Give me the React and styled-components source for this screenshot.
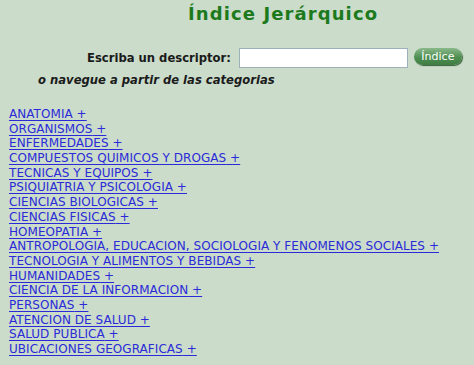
import styled, { createGlobalStyle } from 'styled-components';

const categories = [
  'ANATOMIA',
  'ORGANISMOS',
  'ENFERMEDADES',
  'COMPUESTOS QUIMICOS Y DROGAS',
  'TECNICAS Y EQUIPOS',
  'PSIQUIATRIA Y PSICOLOGIA',
  'CIENCIAS BIOLOGICAS',
  'CIENCIAS FISICAS',
  'HOMEOPATIA',
  'ANTROPOLOGIA, EDUCACION, SOCIOLOGIA Y FENOMENOS SOCIALES',
  'TECNOLOGIA Y ALIMENTOS Y BEBIDAS',
  'HUMANIDADES',
  'CIENCIA DE LA INFORMACION',
  'PERSONAS',
  'ATENCION DE SALUD',
  'SALUD PUBLICA',
  'UBICACIONES GEOGRAFICAS',
];

const GlobalStyle = createGlobalStyle`
  html, body {
    margin: 0;
    padding: 0;
    background: #cbdccb;
  }
  body {
    font-family: 'DejaVu Sans', Verdana, sans-serif;
  }
`;

const App = () => (
  <Page>
    <GlobalStyle />
    <Title>Índice Jerárquico</Title>
    <SearchRow>
      <Label htmlFor='descriptor'>Escriba un descriptor:</Label>
      <Input id='descriptor' type='text' />
      <IndexButton type='button'>Índice</IndexButton>
    </SearchRow>
    <Browse>o navegue a partir de las categorias</Browse>
    <List>
      {categories.map((c) => (
        <li key={c}>
          <CatLink href='#'>{c} +</CatLink>
        </li>
      ))}
    </List>
  </Page>
);

export default App;

const Page = styled.div`
  width: 474px;
  height: 365px;
  box-sizing: border-box;
  padding: 2px 9px 0 9px;
  background: #cbdccb;
  overflow: hidden;
`;

const Title = styled.h1`
  margin: 0;
  padding-left: 179px;
  text-align: left;
  color: #1c7a1c;
  font-size: 18px;
  font-weight: bold;
  line-height: 24px;
  letter-spacing: 1.1px;
`;

const SearchRow = styled.div`
  display: flex;
  align-items: center;
  margin-top: 21px;
  padding-left: 78px;
  height: 22px;
`;

const Label = styled.label`
  font-size: 11.6px;
  font-weight: bold;
  color: #1a1a1a;
  margin-right: 8px;
`;

const Input = styled.input`
  width: 169px;
  height: 20px;
  box-sizing: border-box;
  border: 1px solid #9fb0bd;
  background: #fff;
  margin: 0;
  padding: 0 3px;
`;

const IndexButton = styled.button`
  margin-left: 6px;
  margin-top: -4px;
  width: 48px;
  height: 17px;
  border: none;
  border-radius: 9px;
  background: linear-gradient(#8ab98a, #4f8f52 55%, #3f7d42);
  box-shadow: 1px 1px 1px #3b5f3b;
  color: #fff;
  font-family: 'DejaVu Sans', Verdana, sans-serif;
  font-size: 11px;
  padding: 0;
  line-height: 17px;
`;

const Browse = styled.div`
  margin-top: 3px;
  padding-left: 29px;
  font-size: 11.6px;
  font-weight: bold;
  font-style: italic;
  color: #1a1a1a;
  line-height: 16px;
`;

const List = styled.ul`
  list-style: none;
  margin: 18px 0 0 0;
  padding: 0;

  li {
    line-height: 14.7px;
    height: 14.7px;
  }
`;

const CatLink = styled.a`
  color: #2a2ad8;
  font-size: 12px;
  letter-spacing: 0.05px;
  text-decoration: underline;
  text-underline-offset: 2px;
`;
